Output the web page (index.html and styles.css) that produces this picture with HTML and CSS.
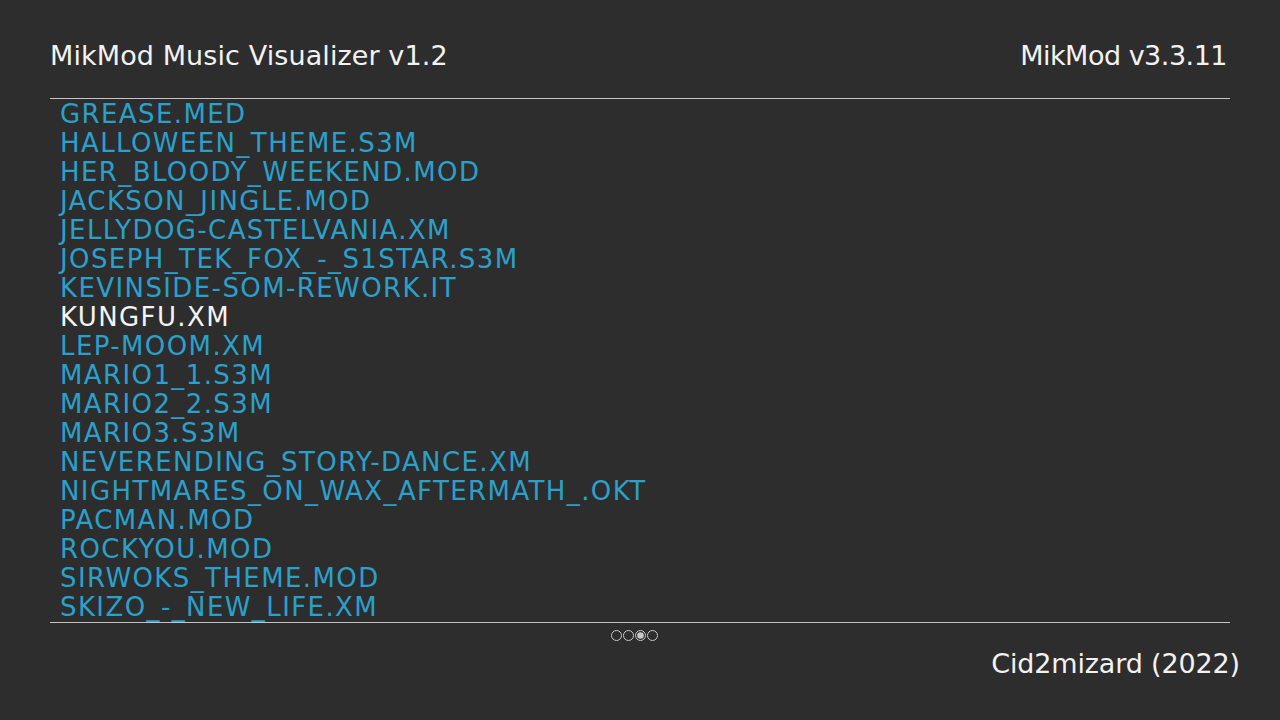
FILE: index.html
```html
<!DOCTYPE html>
<html>
<head>
<meta charset="utf-8">
<link rel="stylesheet" href="styles.css">
</head>
<body>
<div class="screen">
  <header class="top">
    <div class="title">MikMod Music Visualizer v1.2</div>
    <div class="version">MikMod v3.3.11</div>
  </header>
  <ul class="list">
    <li>GREASE.MED</li>
    <li>HALLOWEEN_THEME.S3M</li>
    <li>HER_BLOODY_WEEKEND.MOD</li>
    <li>JACKSON_JINGLE.MOD</li>
    <li>JELLYDOG-CASTELVANIA.XM</li>
    <li>JOSEPH_TEK_FOX_-_S1STAR.S3M</li>
    <li>KEVINSIDE-SOM-REWORK.IT</li>
    <li class="sel">KUNGFU.XM</li>
    <li>LEP-MOOM.XM</li>
    <li>MARIO1_1.S3M</li>
    <li>MARIO2_2.S3M</li>
    <li>MARIO3.S3M</li>
    <li>NEVERENDING_STORY-DANCE.XM</li>
    <li>NIGHTMARES_ON_WAX_AFTERMATH_.OKT</li>
    <li>PACMAN.MOD</li>
    <li>ROCKYOU.MOD</li>
    <li>SIRWOKS_THEME.MOD</li>
    <li>SKIZO_-_NEW_LIFE.XM</li>
  </ul>
  <div class="pager">
    <svg width="48" height="13" viewBox="0 0 48 13">
      <circle cx="5.5" cy="6.5" r="5" fill="none" stroke="#c8c8c8" stroke-width="1"/>
      <circle cx="17.5" cy="6.5" r="5" fill="none" stroke="#c8c8c8" stroke-width="1"/>
      <circle cx="29.5" cy="6.5" r="5" fill="none" stroke="#c8c8c8" stroke-width="1"/>
      <circle cx="29.5" cy="6.5" r="3.3" fill="#c8c8c8"/>
      <circle cx="41.5" cy="6.5" r="5" fill="none" stroke="#c8c8c8" stroke-width="1"/>
    </svg>
  </div>
  <footer class="credit">Cid2mizard (2022)</footer>
</div>
</body>
</html>
```
FILE: styles.css
```css
html, body {
  margin: 0;
  padding: 0;
  background: #2d2d2d;
}
body {
  width: 1280px;
  height: 720px;
  overflow: hidden;
  font-family: "DejaVu Sans", "Liberation Sans", sans-serif;
  color: #f2f2f2;
}
.screen {
  padding: 0 50px;
}
.top {
  display: flex;
  justify-content: space-between;
  align-items: flex-end;
  border-bottom: 1px solid #c4c4c4;
  box-sizing: border-box;
  height: 99px;
  padding: 0 3px 27px 0;
  font-size: 27px;
  line-height: 31px;
}
.title {
  letter-spacing: 0.1px;
}
.version {
  letter-spacing: -0.5px;
}
.list {
  list-style: none;
  margin: 0;
  padding: 1px 0 0 10px;
  height: 524px;
  box-sizing: border-box;
  border-bottom: 1px solid #c4c4c4;
  font-size: 26px;
  line-height: 29px;
  letter-spacing: 1.4px;
  color: #2aa0ca;
}
.list li {
  white-space: nowrap;
}
.list li.sel {
  color: #f4f4f4;
}
.pager {
  display: flex;
  justify-content: center;
  padding-top: 6px;
  padding-right: 11px;
  height: 13px;
}
.pager svg {
  display: block;
}
.credit {
  text-align: right;
  margin-right: -10px;
  margin-top: 6px;
  font-size: 27px;
  line-height: 31px;
  letter-spacing: -0.15px;
}
```
